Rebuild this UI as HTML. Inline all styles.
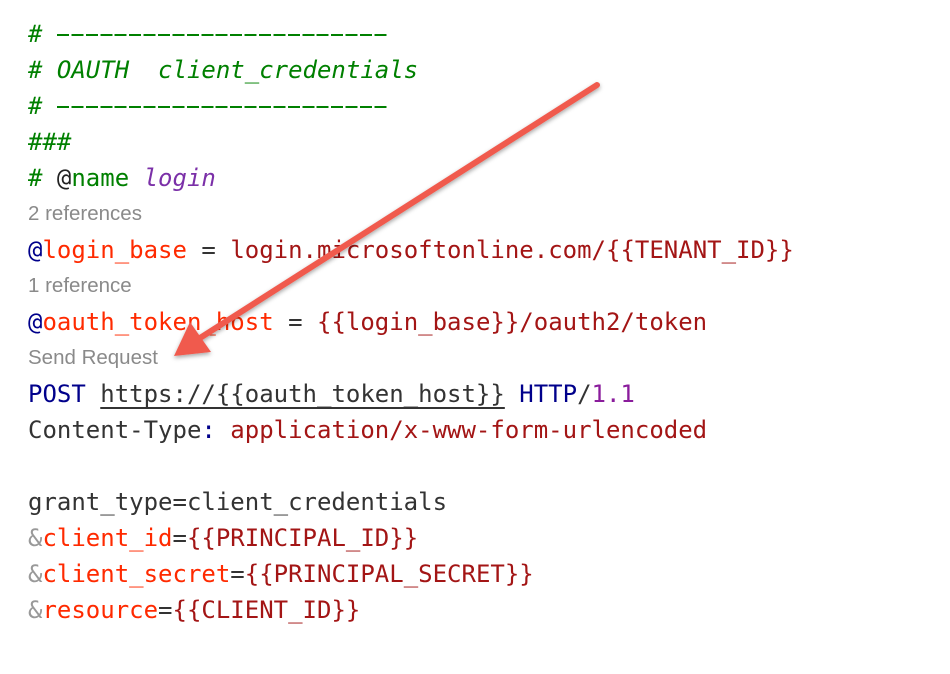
<!DOCTYPE html>
<html><head><meta charset="utf-8"><style>
body{margin:0;width:950px;height:674px;background:#fff;overflow:hidden;position:relative}
.l{position:absolute;left:28px;height:36px;line-height:36px;font-family:"DejaVu Sans Mono","Liberation Mono",monospace;font-size:24px;color:#333;white-space:pre}
.s{position:absolute;left:28px;height:36px;line-height:36px;font-family:"Liberation Sans",sans-serif;font-size:20.5px;color:#8a8a8a}
.c{color:#008000}.i{font-style:italic}.p{color:#7b30a8}.b{color:#00008b}.v{color:#ff2a00}.r{color:#a31515}.g{color:#999}.k{color:#222}
.d{display:inline-block;width:332px;height:36px;vertical-align:top;background:repeating-linear-gradient(90deg,#008000 0 12px,transparent 12px 14.43px) 0 18px/332px 2px no-repeat}
</style></head><body>
<div class="l c i" style="top:16px"># <span class="d"></span></div>
<div class="l c i" style="top:52px"># OAUTH  client_credentials</div>
<div class="l c i" style="top:88px"># <span class="d"></span></div>
<div class="l c" style="top:124px">###</div>
<div class="l" style="top:160px"><span class="c"># </span><span class="k">@</span><span class="c">name</span> <span class="p i">login</span></div>
<div class="s" style="top:196px">2 references</div>
<div class="l" style="top:232px"><span class="b">@</span><span class="v">login_base</span> = <span class="r">login.microsoftonline.com/{{TENANT_ID}}</span></div>
<div class="s" style="top:268px">1 reference</div>
<div class="l" style="top:304px"><span class="b">@</span><span class="v">oauth_token_host</span> = <span class="r">{{login_base}}/oauth2/token</span></div>
<div class="s" style="top:340px">Send Request</div>
<div class="l" style="top:376px"><span class="b">POST</span> <span style="text-decoration:underline;text-underline-offset:5px">https://{{oauth_token_host}}</span> <span class="b">HTTP</span>/<span style="color:#8a1c9c">1.1</span></div>
<div class="l" style="top:412px">Content-Type<span class="b">:</span> <span class="r">application/x-www-form-urlencoded</span></div>
<div class="l" style="top:484px">grant_type=client_credentials</div>
<div class="l" style="top:520px"><span class="g">&amp;</span><span class="v">client_id</span>=<span class="r">{{PRINCIPAL_ID}}</span></div>
<div class="l" style="top:556px"><span class="g">&amp;</span><span class="v">client_secret</span>=<span class="r">{{PRINCIPAL_SECRET}}</span></div>
<div class="l" style="top:592px"><span class="g">&amp;</span><span class="v">resource</span>=<span class="r">{{CLIENT_ID}}</span></div>
<svg width="950" height="674" style="position:absolute;left:0;top:0">
<defs><filter id="sh"><feDropShadow dx="0" dy="2" stdDeviation="2" flood-opacity="0.35"/></filter></defs>
<g filter="url(#sh)">
<line x1="597" y1="85" x2="200" y2="338" stroke="#f05a4e" stroke-width="6" stroke-linecap="round"/>
<polygon points="174,356 190,322 211,352" fill="#f05a4e"/>
</g>
</svg>
</body></html>
